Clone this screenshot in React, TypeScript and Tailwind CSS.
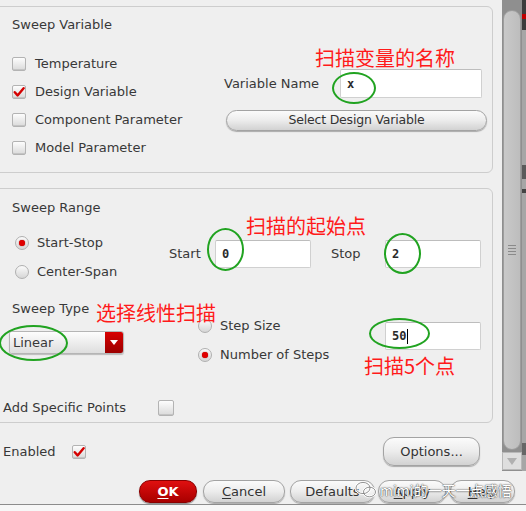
import React from "react";

const Check = ({ checked = false, size = 14 }: { checked?: boolean; size?: number }) => (
  <span
    className="flex items-center justify-center rounded-[2px] border border-[#b3b3b3] bg-linear-to-b from-[#fdfdfd] to-[#dadada] shadow-[inset_0_-1px_0_#c4c4c4]"
    style={{ width: size, height: size }}
  >
    {checked && (
      <svg width="12" height="12" viewBox="0 0 12 12">
        <path d="M1.8 6.2 L4.6 9.4 L10.6 2.2" fill="none" stroke="#d40000" strokeWidth="2.4" strokeLinecap="round" strokeLinejoin="round" />
      </svg>
    )}
  </span>
);

const Radio = ({ on = false }: { on?: boolean }) => (
  <span className="flex h-[14px] w-[14px] items-center justify-center rounded-full border border-[#b0b0b0] bg-linear-to-b from-[#fbfbfb] to-[#d6d6d6]">
    {on && <span className="h-[6px] w-[6px] rounded-full bg-[#e00000] shadow-[0_0_1px_#900]" />}
  </span>
);

const Field = ({ value, w, h = 28, cursor = false }: { value: string; w: number; h?: number; cursor?: boolean }) => (
  <div
    className="flex items-center rounded-[2px] border border-[#d0d0d0] border-t-[#bdbdbd] bg-white pl-[6px] font-['DejaVu_Sans_Mono',monospace] text-[12px] font-bold text-[#2a2a2a]"
    style={{ width: w, height: h }}
  >
    {value}
    {cursor && <span className="ml-[1px] h-[15px] w-[1px] bg-black" />}
  </div>
);

const Pill = ({ children, w, h = 23, red = false }: { children: React.ReactNode; w: number; h?: number; red?: boolean }) => (
  <div
    className={
      red
        ? "flex items-center justify-center rounded-[11px] border border-[#8a0000] bg-linear-to-b from-[#e01010] to-[#a80000] text-[13px] font-bold text-white shadow-[0_1px_1px_#888]"
        : "flex items-center justify-center rounded-[11px] border border-[#a3a3a3] bg-linear-to-b from-[#fbfbfb] via-[#ececec] to-[#d2d2d2] text-[13px] text-[#333] shadow-[0_1px_1px_#aaa]"
    }
    style={{ width: w, height: h }}
  >
    {children}
  </div>
);

const Ring = ({ l, t, w, h }: { l: number; t: number; w: number; h: number }) => (
  <div
    className="pointer-events-none absolute rounded-[50%] border-[2.5px] border-[#21a321]"
    style={{ left: l, top: t, width: w, height: h }}
  />
);

const note = "pointer-events-none absolute whitespace-nowrap text-[20px] leading-[22px] text-[#ff1a1a] font-['Noto_Sans_CJK_SC',sans-serif]";

export default function App() {
  return (
    <div className="relative flex h-[511px] w-[526px] flex-col overflow-hidden bg-[#efefef] font-['DejaVu_Sans',sans-serif] text-[13px] text-[#383838]">
      <div className="flex h-[471px]">
        <div className="flex w-[502px] flex-col">
          {/* Sweep Variable */}
          <section className="ml-[-8px] mt-[6px] h-[167px] w-[501px] rounded-[6px] border border-[#cdcdcd] pl-[19px] pt-[10px]">
            <div className="h-[16px] leading-[16px]">Sweep Variable</div>
            <div className="mt-[17px] flex">
              <div className="w-[212px]">
                {[
                  ["Temperature", false],
                  ["Design Variable", true],
                  ["Component Parameter", false],
                  ["Model Parameter", false],
                ].map(([label, on]) => (
                  <div key={label as string} className="flex h-[28px] items-center gap-[9px]">
                    <Check checked={on as boolean} />
                    <span>{label}</span>
                  </div>
                ))}
              </div>
              <div className="flex flex-col">
                <div className="mt-[19px] flex items-center">
                  <span className="w-[116px]">Variable Name</span>
                  <Field value="x" w={142} h={29} />
                </div>
                <div className="ml-[2px] mt-[12px]">
                  <Pill w={261} h={21}>
                    <span className="text-[12.5px] tracking-[-0.2px]">Select Design Variable</span>
                  </Pill>
                </div>
              </div>
            </div>
          </section>

          {/* Sweep Range */}
          <section className="ml-[-8px] mt-[15px] h-[235px] w-[501px] rounded-[6px] border border-[#cdcdcd] pl-[19px] pt-[11px]">
            <div className="h-[16px] leading-[16px]">Sweep Range</div>
            <div className="mt-[13px] flex">
              <div className="w-[157px] pl-[3px]">
                <div className="flex h-[28px] items-center gap-[8px]">
                  <Radio on />
                  <span>Start-Stop</span>
                </div>
                <div className="flex h-[29px] items-center gap-[8px]">
                  <Radio />
                  <span>Center-Span</span>
                </div>
              </div>
              <div className="mt-[11px] flex h-[28px] items-center">
                <span className="w-[46px]">Start</span>
                <Field value="0" w={96} />
                <span className="ml-[20px] w-[54px]">Stop</span>
                <Field value="2" w={96} />
              </div>
            </div>
            <div className="mt-[15px] flex">
              <div className="w-[186px]">
                <div className="h-[16px] leading-[16px]">Sweep Type</div>
                <div className="ml-[-3px] mt-[14px] flex h-[23px] w-[115px] overflow-hidden rounded-[3px] border border-[#b5b5b5] shadow-[0_1px_1px_#bbb]">
                  <div className="flex flex-1 items-center bg-linear-to-b from-[#fdfdfd] to-[#dedede] pl-[3px]">Linear</div>
                  <div className="flex w-[18px] items-center justify-center bg-linear-to-b from-[#d80000] to-[#9c0000]">
                    <svg width="8" height="5" viewBox="0 0 8 5">
                      <path d="M0 0 H8 L4 5 Z" fill="#fff" />
                    </svg>
                  </div>
                </div>
              </div>
              <div className="w-[187px] pt-[10px]">
                <div className="flex h-[29px] items-center gap-[8px]">
                  <Radio />
                  <span>Step Size</span>
                </div>
                <div className="flex h-[29px] items-center gap-[8px]">
                  <Radio on />
                  <span>Number of Steps</span>
                </div>
              </div>
              <div className="mt-[21px]">
                <Field value="50" w={96} cursor />
              </div>
            </div>
            <div className="ml-[-9px] mt-[29px] flex h-[20px] items-center">
              <span className="w-[155px]">Add Specific Points</span>
              <Check size={16} />
            </div>
          </section>

          <div className="mt-[14px] flex h-[29px] items-center pl-[3px]">
            <span className="w-[69px]">Enabled</span>
            <Check checked />
            <div className="ml-auto mr-[22px]">
              <Pill w={97} h={29}>Options...</Pill>
            </div>
          </div>
        </div>

        {/* scrollbar */}
        <div className="flex w-[20px] flex-col bg-[#8f8f8f] pb-[1px] pt-[10px]">
          <div className="mx-[1px] flex flex-1 flex-col items-center rounded-[9px] border border-[#9d9d9d] bg-linear-to-r from-[#c9c9c9] to-[#bdbdbd] pt-[234px]">
            <div className="flex w-[8px] flex-col gap-[2px]">
              <span className="h-[1px] bg-[#8a8a8a]" />
              <span className="h-[1px] bg-[#8a8a8a]" />
              <span className="h-[1px] bg-[#8a8a8a]" />
              <span className="h-[1px] bg-[#8a8a8a]" />
            </div>
          </div>
          <div className="mt-[2px] flex h-[18px] items-center justify-center border border-[#b8b8b8] bg-[#dedede]">
            <svg width="10" height="7" viewBox="0 0 10 7">
              <path d="M0 0 H10 L5 7 Z" fill="#b0b0b0" />
            </svg>
          </div>
        </div>
        <div className="flex w-[4px] flex-col bg-[#a6a6a6]">
          <div className="h-[30px] bg-[#3c3c3c]">
            <div className="mt-[14px] h-[5px] w-[4px] bg-[#c00000]" />
          </div>
          <div className="mt-[135px] h-[14px] bg-[#5a5a5a]" />
          <div className="mt-[10px] h-[4px] bg-[#444]" />
          <div className="mt-[250px] h-[12px] bg-[#666]" />
        </div>
      </div>

      {/* dialog buttons */}
      <div className="flex flex-1 flex-col">
        <div className="mt-[9px] flex h-[23px] pl-[139px]">
          <Pill w={58} red>
            <span className="underline underline-offset-2">O</span>K
          </Pill>
          <div className="ml-[6px]">
            <Pill w={82}>
              <span className="underline underline-offset-2">C</span>ancel
            </Pill>
          </div>
          <div className="ml-[5px]">
            <Pill w={85}>Defaults</Pill>
          </div>
          <div className="ml-[3px]">
            <Pill w={68}>
              <span className="underline underline-offset-2">A</span>pply
            </Pill>
          </div>
          <div className="ml-[4px]">
            <Pill w={65}>
              <span className="underline underline-offset-2">H</span>elp
            </Pill>
          </div>
        </div>
        <div className="mt-[1px] flex-1 border-t border-[#8c8c8c] bg-[#f7f7f7]" />
      </div>

      {/* annotations */}
      <div className={note} style={{ left: 315, top: 47 }}>扫描变量的名称</div>
      <div className={note} style={{ left: 246, top: 215 }}>扫描的起始点</div>
      <div className={note} style={{ left: 96, top: 302 }}>选择线性扫描</div>
      <div className={note} style={{ left: 364, top: 355 }}>扫描5个点</div>
      <Ring l={332} t={72} w={44} h={32} />
      <Ring l={207} t={228} w={37} h={43} />
      <Ring l={384} t={233} w={37} h={41} />
      <Ring l={369} t={318} w={61} h={31} />
      <Ring l={-1} t={325} w={69} h={36} />

      {/* watermark */}
      <div className="pointer-events-none absolute left-[355px] top-[481px] flex items-center whitespace-nowrap">
        <svg width="22" height="18" viewBox="0 0 22 18">
          <ellipse cx="8" cy="7" rx="7" ry="5.6" fill="none" stroke="#fff" strokeWidth="2.4" />
          <ellipse cx="14.5" cy="11" rx="6" ry="4.8" fill="#fff" fillOpacity="0.4" stroke="#fff" strokeWidth="2.4" />
          <ellipse cx="8" cy="7" rx="7" ry="5.6" fill="none" stroke="#777" strokeWidth="0.8" />
          <ellipse cx="14.5" cy="11" rx="6" ry="4.8" fill="none" stroke="#777" strokeWidth="0.8" />
        </svg>
        <span className="ml-[3px] whitespace-nowrap text-[14px] leading-[18px] text-white font-['Noto_Sans_CJK_SC',sans-serif] [text-shadow:0_0_1px_#333,0_0_2px_#555]">
          mimi的一天一点感悟
        </span>
      </div>
    </div>
  );
}
